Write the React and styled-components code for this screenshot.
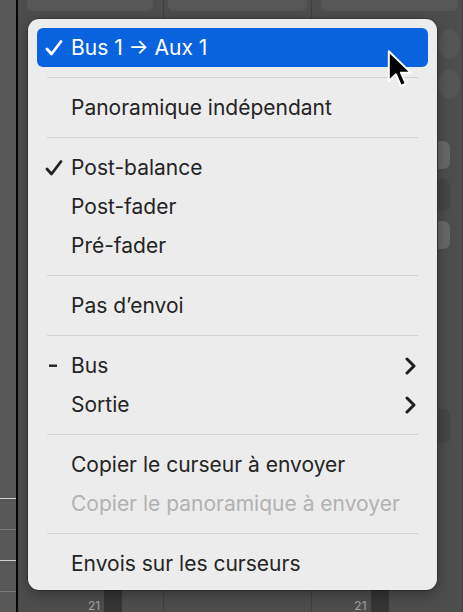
import React from 'react';
import styled, { createGlobalStyle } from 'styled-components';

const Global = createGlobalStyle`
  html, body {
    margin: 0;
    padding: 0;
    background: #4d4d4d;
  }
  #root {
    width: 463px;
    height: 612px;
    overflow: hidden;
  }
`;

const Stage = styled.div`
  position: relative;
  width: 463px;
  height: 612px;
  display: flex;
  background: #4d4d4d;
  font-family: Inter, 'Liberation Sans', sans-serif;
`;

const LeftStrip = styled.div`
  width: 16px;
  background: #585858;
  border-right: 2px solid #050505;
  display: flex;
  flex-direction: column;
  justify-content: flex-end;
  padding-bottom: 20px;
  gap: 30px;
`;

const Tick = styled.div`
  height: 1px;
  background: ${p => (p.bright ? '#cfcfcf' : '#7a7a7a')};
`;

const Strip = styled.div`
  width: ${p => p.w}px;
  border-right: 1px solid #3f3f3f;
  display: flex;
  flex-direction: column;
`;

const TopBox = styled.div`
  height: 11px;
  margin: 0 ${p => p.mr || 10}px 0 ${p => p.ml || 9}px;
  background: #575757;
  border-radius: 0 0 6px 6px;
`;

const RightStuff = styled.div`
  display: flex;
  flex-direction: column;
  gap: 10px;
  padding-top: 18px;
  padding-left: 126px;
`;

const Knob = styled.div`
  width: 22px;
  height: 30px;
  border-radius: 50%;
  background: #555;
`;

const Pill = styled.div`
  width: 12px;
  height: ${p => p.h || 28}px;
  margin-top: ${p => p.mt || 0}px;
  border-radius: 0 7px 7px 0;
  background: ${p => (p.dark ? '#464646' : '#676767')};
`;

const Meter = styled.div`
  margin-top: auto;
  height: 22px;
  display: flex;
  align-items: flex-end;
  gap: 4px;
  padding-left: ${p => p.pl}px;
  color: #a5a5a5;
  font-size: 12px;
  line-height: 12px;
`;

const MeterDark = styled.div`
  width: 18px;
  height: 22px;
  background: #353535;
`;

const Menu = styled.div`
  position: absolute;
  left: 28px;
  top: 19px;
  width: 409px;
  box-sizing: border-box;
  padding: 9px 9px 7px;
  background: #ececec;
  border-radius: 11px;
  box-shadow: 0 4px 14px rgba(0, 0, 0, 0.35), 0 0 0 0.5px rgba(0, 0, 0, 0.4);
`;

const Item = styled.div`
  height: 39px;
  display: flex;
  align-items: center;
  padding: 0 12px 0 8px;
  border-radius: 6px;
  font-size: 21px;
  background: ${p => (p.active ? '#0a63de' : 'transparent')};
  color: ${p => (p.active ? '#fff' : p.disabled ? '#b2b2b2' : '#242424')};
`;

const Mark = styled.span`
  width: 26px;
  display: flex;
  align-items: center;
`;

const Label = styled.span`
  flex: 1;
  white-space: nowrap;
`;

const Sep = styled.div`
  height: 1px;
  margin: 10px 10px;
  background: #d2d2d2;
`;

const Cursor = styled.svg`
  position: absolute;
  left: 385px;
  top: 49px;
`;

const Check = ({ color }) => (
  <svg width="18" height="16" viewBox="0 0 18 16">
    <path d="M2 9 L6.5 14 L16 1.5" fill="none" stroke={color} strokeWidth="2.8" strokeLinecap="round" strokeLinejoin="round" />
  </svg>
);

const Dash = () => (
  <svg width="18" height="4" viewBox="0 0 18 4">
    <rect x="4" y="0.5" width="8" height="2.4" fill="#242424" />
  </svg>
);

const Chevron = () => (
  <svg width="12" height="18" viewBox="0 0 12 18">
    <path d="M3 2 L10 9 L3 16" fill="none" stroke="#1e1e1e" strokeWidth="3" strokeLinecap="round" strokeLinejoin="round" />
  </svg>
);

const MenuRow = ({ children, mark, sub, ...rest }) => (
  <Item {...rest}>
    <Mark>{mark}</Mark>
    <Label>{children}</Label>
    {sub && <Chevron />}
  </Item>
);

export default function App() {
  return (
    <Stage>
      <Global />
      <LeftStrip>
        <Tick bright />
        <Tick />
        <Tick bright />
        <Tick />
      </LeftStrip>
      <Strip w={145}>
        <TopBox />
        <Meter pl={70}>
          <span>21</span>
          <MeterDark />
        </Meter>
      </Strip>
      <Strip w={148}>
        <TopBox ml={4} mr={4} />
      </Strip>
      <Strip w={150}>
        <TopBox ml={9} mr={4} />
        <RightStuff>
          <Knob />
          <Knob />
          <Pill mt={32} />
          <Pill dark h={32} />
          <Pill />
          <Pill dark h={34} mt={150} />
        </RightStuff>
        <Meter pl={42}>
          <span>21</span>
          <MeterDark />
        </Meter>
      </Strip>

      <Menu>
        <MenuRow active mark={<Check color="#fff" />}>Bus 1 → Aux 1</MenuRow>
        <Sep />
        <MenuRow>Panoramique indépendant</MenuRow>
        <Sep />
        <MenuRow mark={<Check color="#222" />}>Post-balance</MenuRow>
        <MenuRow>Post-fader</MenuRow>
        <MenuRow>Pré-fader</MenuRow>
        <Sep />
        <MenuRow>Pas d’envoi</MenuRow>
        <Sep />
        <MenuRow mark={<Dash />} sub>Bus</MenuRow>
        <MenuRow sub>Sortie</MenuRow>
        <Sep />
        <MenuRow>Copier le curseur à envoyer</MenuRow>
        <MenuRow disabled>Copier le panoramique à envoyer</MenuRow>
        <Sep />
        <MenuRow>Envois sur les curseurs</MenuRow>
      </Menu>

      <Cursor width="34" height="44" viewBox="0 0 30 40">
        <path d="M3 2 L3 29 L9.5 23 L14 33.5 L18.5 31.5 L14 21.5 L23 21.5 Z" fill="#000" stroke="#fff" strokeWidth="1.8" strokeLinejoin="round" />
      </Cursor>
    </Stage>
  );
}
